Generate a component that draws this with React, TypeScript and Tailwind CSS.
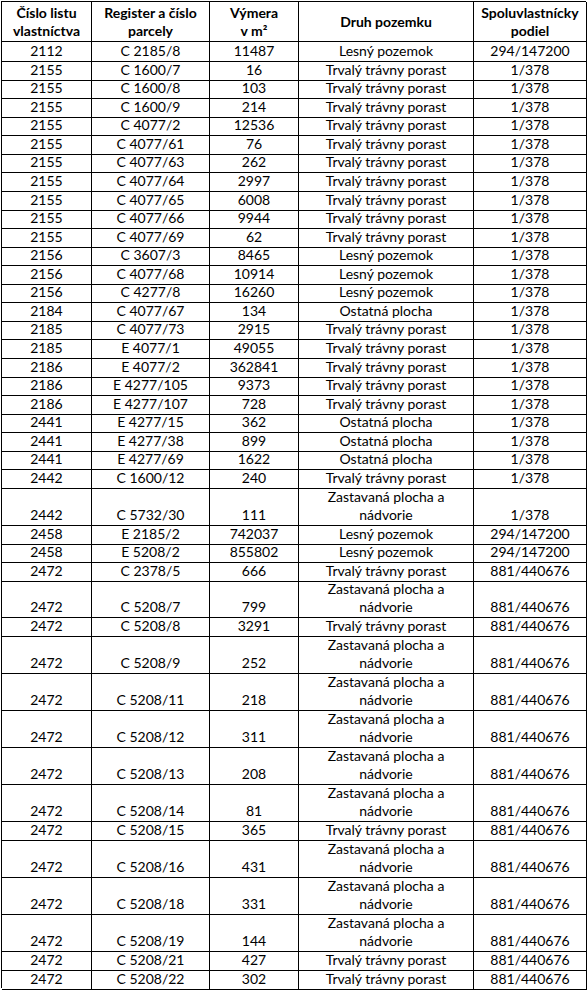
const TTP = 'Trvalý trávny porast'
const LP = 'Lesný pozemok'
const OP = 'Ostatná plocha'
const ZP = 'Zastavaná plocha a nádvorie'

type Row = [string, string, string, string, string]

const rows: Row[] = [
  ['2112', 'C 2185/8', '11487', LP, '294/147200'],
  ['2155', 'C 1600/7', '16', TTP, '1/378'],
  ['2155', 'C 1600/8', '103', TTP, '1/378'],
  ['2155', 'C 1600/9', '214', TTP, '1/378'],
  ['2155', 'C 4077/2', '12536', TTP, '1/378'],
  ['2155', 'C 4077/61', '76', TTP, '1/378'],
  ['2155', 'C 4077/63', '262', TTP, '1/378'],
  ['2155', 'C 4077/64', '2997', TTP, '1/378'],
  ['2155', 'C 4077/65', '6008', TTP, '1/378'],
  ['2155', 'C 4077/66', '9944', TTP, '1/378'],
  ['2155', 'C 4077/69', '62', TTP, '1/378'],
  ['2156', 'C 3607/3', '8465', LP, '1/378'],
  ['2156', 'C 4077/68', '10914', LP, '1/378'],
  ['2156', 'C 4277/8', '16260', LP, '1/378'],
  ['2184', 'C 4077/67', '134', OP, '1/378'],
  ['2185', 'C 4077/73', '2915', TTP, '1/378'],
  ['2185', 'E 4077/1', '49055', TTP, '1/378'],
  ['2186', 'E 4077/2', '362841', TTP, '1/378'],
  ['2186', 'E 4277/105', '9373', TTP, '1/378'],
  ['2186', 'E 4277/107', '728', TTP, '1/378'],
  ['2441', 'E 4277/15', '362', OP, '1/378'],
  ['2441', 'E 4277/38', '899', OP, '1/378'],
  ['2441', 'E 4277/69', '1622', OP, '1/378'],
  ['2442', 'C 1600/12', '240', TTP, '1/378'],
  ['2442', 'C 5732/30', '111', ZP, '1/378'],
  ['2458', 'E 2185/2', '742037', LP, '294/147200'],
  ['2458', 'E 5208/2', '855802', LP, '294/147200'],
  ['2472', 'C 2378/5', '666', TTP, '881/440676'],
  ['2472', 'C 5208/7', '799', ZP, '881/440676'],
  ['2472', 'C 5208/8', '3291', TTP, '881/440676'],
  ['2472', 'C 5208/9', '252', ZP, '881/440676'],
  ['2472', 'C 5208/11', '218', ZP, '881/440676'],
  ['2472', 'C 5208/12', '311', ZP, '881/440676'],
  ['2472', 'C 5208/13', '208', ZP, '881/440676'],
  ['2472', 'C 5208/14', '81', ZP, '881/440676'],
  ['2472', 'C 5208/15', '365', TTP, '881/440676'],
  ['2472', 'C 5208/16', '431', ZP, '881/440676'],
  ['2472', 'C 5208/18', '331', ZP, '881/440676'],
  ['2472', 'C 5208/19', '144', ZP, '881/440676'],
  ['2472', 'C 5208/21', '427', TTP, '881/440676'],
  ['2472', 'C 5208/22', '302', TTP, '881/440676'],
]

const cols = 'grid grid-cols-[90px_118px_89px_175px_113px]'
const cell = 'flex items-end justify-center text-center border-r border-b border-black px-1 pb-[1px]'

function Header() {
  const heads = [
    ['Číslo listu', 'vlastníctva'],
    ['Register a číslo', 'parcely'],
    ['Výmera', 'v m²'],
    ['Druh pozemku'],
    ['Spoluvlastnícky', 'podiel'],
  ]
  return (
    <div className={`${cols} h-[40px]`}>
      {heads.map((h, i) => (
        <div key={i} className="flex flex-col items-center justify-center border-r border-b border-black font-bold leading-[18px]">
          {h.map((line) => (
            <span key={line}>{line}</span>
          ))}
        </div>
      ))}
    </div>
  )
}

function DataRow({ row }: { row: Row }) {
  const tall = row[3] === ZP
  return (
    <div className={`${cols} ${tall ? 'h-[37.1px]' : 'h-[18.57px]'}`}>
      <div className={cell}>{row[0]}</div>
      <div className={cell}>{row[1]}</div>
      <div className={cell}>{row[2]}</div>
      <div className={cell}>
        {tall ? (
          <span>
            Zastavaná plocha a
            <br />
            nádvorie
          </span>
        ) : (
          row[3]
        )}
      </div>
      <div className={cell}>{row[4]}</div>
    </div>
  )
}

export default function App() {
  return (
    <div className="min-h-screen bg-white p-[1px] text-black">
      <div className="w-[585px] border-l border-t border-black font-['Lato',sans-serif] text-[14px] leading-[18px]">
        <Header />
        {rows.map((r, i) => (
          <DataRow key={i} row={r} />
        ))}
      </div>
    </div>
  )
}
